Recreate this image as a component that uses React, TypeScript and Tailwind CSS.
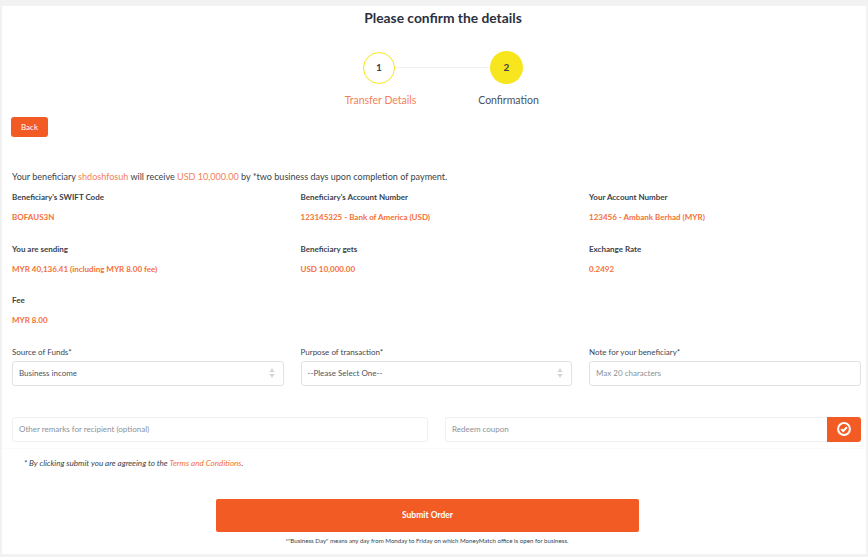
const details = [
  ["Beneficiary's SWIFT Code", "BOFAUS3N"],
  ["Beneficiary's Account Number", "123145325 - Bank of America (USD)"],
  ["Your Account Number", "123456 - Ambank Berhad (MYR)"],
  ["You are sending", "MYR 40,136.41 (including MYR 8.00 fee)"],
  ["Beneficiary gets", "USD 10,000.00"],
  ["Exchange Rate", "0.2492"],
  ["Fee", "MYR 8.00"],
];

function Arrows() {
  return (
    <svg width="6" height="10" viewBox="0 0 6 10" className="fill-[#d4d6d9]">
      <path d="M3 0 L5.6 4 H0.4 Z" />
      <path d="M3 10 L5.6 6 H0.4 Z" />
    </svg>
  );
}

function CheckIcon() {
  return (
    <svg width="14" height="14" viewBox="0 0 14 14" fill="none" stroke="white">
      <circle cx="7" cy="7" r="5.9" strokeWidth="2" />
      <path d="M4.2 7.1 L6.2 9 L9.9 5.2" strokeWidth="2" />
    </svg>
  );
}

function SelectBox({ label, value }: { label: string; value: string }) {
  return (
    <div>
      <div className="h-[15px] text-[8px] leading-[12px] text-[#3d4550]">{label}</div>
      <div className="flex h-[25px] items-center justify-between rounded-[3px] border border-[#e2e2e2] bg-white pl-[6px] pr-[8px] text-[8px] text-[#4b5563]">
        <span>{value}</span>
        <Arrows />
      </div>
    </div>
  );
}

export default function App() {
  return (
    <div className="h-[557px] w-[868px] overflow-hidden bg-[#f2f2f2] pl-[2px] pr-[2px] pt-[6px] font-['Lato',sans-serif] text-[#2f3542]">
      <div className="h-[548px] bg-white">
        <div className="flex flex-col items-center pl-[18px]">
          <h1 className="mt-[2px] h-[20px] text-[13.8px] font-bold leading-[20px] text-[#2b3040]">Please confirm the details</h1>
          <div className="mt-[23px] flex items-center">
            <div className="flex h-[32px] w-[32px] items-center justify-center rounded-full border border-[#f7e51d] text-[10px] font-bold text-[#3a3f4a]">1</div>
            <div className="h-px w-[95px] bg-[#f1f1f1]" />
            <div className="flex h-[33px] w-[33px] items-center justify-center rounded-full bg-[#f7e51d] text-[10px] font-bold text-[#3a3f4a]">2</div>
          </div>
          <div className="mt-[9px] flex text-[10.5px] leading-[14px]">
            <div className="w-[128px] pl-[3px] text-center text-[#f4805a]">Transfer Details</div>
            <div className="w-[128px] pl-[3px] text-center text-[#4a5160]">Confirmation</div>
          </div>
        </div>

        <div className="mt-[10px] pl-[9px] pr-[5px]">
          <button className="flex h-[20px] w-[37px] items-center justify-center rounded-[3px] bg-[#f35b25] text-[8px] text-white">Back</button>
        </div>

        <div className="pl-[10px] pr-[5px]">
          <p className="mt-[33px] h-[14px] text-[9.05px] leading-[14px] text-[#3a3f4a]">
            Your beneficiary <span className="text-[#f4805a]">shdoshfosuh</span> will receive <span className="text-[#f4805a]">USD 10,000.00</span> by *two business days upon completion of payment.
          </p>

          <div className="mt-[7px] grid grid-cols-[271.5px_271.5px_271.5px] gap-x-[17px]">
            {details.map(([k, v]) => (
              <div key={k} className="h-[51.5px]">
                <div className="h-[20px] text-[8px] font-bold leading-[12px] text-[#3a3f4a]">{k}</div>
                <div className="text-[8px] font-bold leading-[12px] text-[#f4703a]">{v}</div>
              </div>
            ))}
          </div>

          <div className="grid grid-cols-[271.5px_271.5px_271.5px] gap-x-[17px]">
            <SelectBox label="Source of Funds*" value="Business income" />
            <SelectBox label="Purpose of transaction*" value="--Please Select One--" />
            <div>
              <div className="h-[15px] text-[8px] leading-[12px] text-[#3d4550]">Note for your beneficiary*</div>
              <input
                placeholder="Max 20 characters"
                className="block h-[25px] w-full rounded-[3px] border border-[#e2e2e2] bg-white px-[6px] text-[8px] outline-none placeholder:text-[#8b919a]"
              />
            </div>
          </div>

          <div className="mt-[31px] flex gap-[17px]">
            <input
              placeholder="Other remarks for recipient (optional)"
              className="block h-[25px] w-[416px] rounded-[3px] border border-[#f0f0f0] bg-white px-[6px] text-[8px] outline-none placeholder:text-[#8b919a]"
            />
            <div className="flex h-[25px] w-[416px]">
              <input
                placeholder="Redeem coupon"
                className="block h-full min-w-0 flex-1 rounded-l-[3px] border border-r-0 border-[#f0f0f0] bg-white px-[6px] text-[8px] outline-none placeholder:text-[#8b919a]"
              />
              <div className="flex w-[34px] items-center justify-center rounded-r-[3px] bg-[#f35b25] text-white">
                <CheckIcon />
              </div>
            </div>
          </div>
        </div>

        <div className="mt-[6px] h-px bg-[#fafafa]" />

        <p className="mt-[8px] pl-[22px] text-[8.1px] italic leading-[12px] text-[#3a3f4a]">
          * By clicking submit you are agreeing to the <span className="text-[#f4703a]">Terms and Conditions</span>.
        </p>

        <div className="mt-[30px] flex flex-col items-center pr-[13px]">
          <button className="flex h-[33px] w-[423px] items-center justify-center rounded-[2px] bg-[#f35b25] pt-[1px] text-[8.5px] font-bold text-white">Submit Order</button>
          <p className="mt-[4px] pr-[1px] text-[6.15px] leading-[10px] text-[#3a3f4a]">*"Business Day" means any day from Monday to Friday on which MoneyMatch office is open for business.</p>
        </div>
      </div>
    </div>
  );
}
